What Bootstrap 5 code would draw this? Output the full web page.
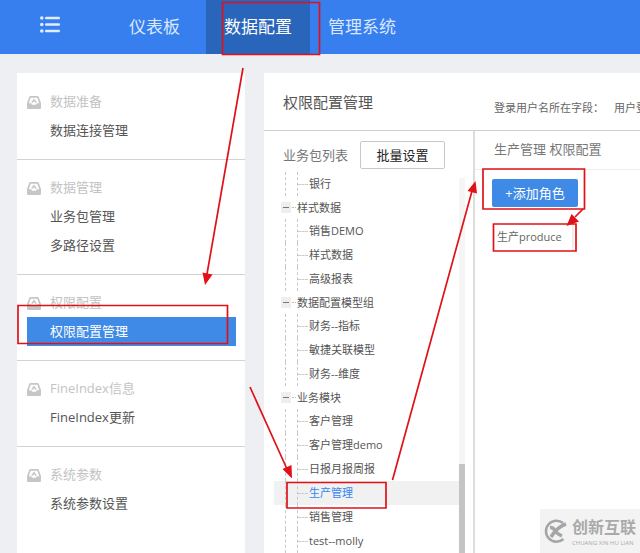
<!DOCTYPE html>
<html lang="zh-CN">
<head>
<meta charset="utf-8">
<meta name="viewport" content="width=device-width, initial-scale=1">
<title>权限配置管理</title>
<link href="https://cdn.jsdelivr.net/npm/bootstrap@5.3.0/dist/css/bootstrap.min.css" rel="stylesheet">
<style>
body{font-family:"Open Sans","Noto Sans CJK SC",sans-serif;font-size:13px;line-height:20px;background:#eeeff3;color:#555}
a{color:inherit;text-decoration:none}
.topbar{background:#377eee;min-height:54px;padding-left:28px}
.topbar a,.topbar button{font-size:17px;color:#d9e8ff}
.topbar .menu-btn{width:44px;margin-right:31px}
.topbar .tab{padding:0 18px}
.topbar .tab-wide{padding:0 26px}
.topbar .tab.active{background:#2a65bc;color:#fff}
.workspace{padding:19px 0 0 17px;gap:19px}
.side{width:228px;padding-top:1px}
.side section{padding:14px 9px 14px 10px;border-bottom:1px solid #d3d3d3}
.side section:last-child{border-bottom:0}
.side h2{font-size:13px;font-weight:400;color:#c3c3c3;height:28px;gap:9px}
.side h2 svg{fill:#c6c6c6}
.side a{height:29px;padding:0 0 1px 23px}
.side a.active{background:#3e8ae6;color:#fff}
.main-head{height:58px;padding-left:19px;border-bottom:1px solid #d0d0d0}
.main-head h1{font-size:15px;font-weight:400;width:211px}
.login-field{font-size:11px;gap:10px;padding-top:12px;color:#666}
.packages{width:211px;border-right:2px solid #ddd}
.pack-head{height:41px;padding:7px 0 0 19px;gap:12px;color:#777}
.batch{width:85px;height:28px;font-size:13px;color:#222;background:#fff;border:1px solid #c8c8c8;border-radius:2px;padding:0}
.tree{padding:0 0 0 10px;font-size:11px;min-width:0}
.tree .branch{height:23px;padding-left:7px}
.tree .branch button{width:10px;height:11px;background:#eee;padding:0 2px}
.tree .branch button span{display:block;height:1px;background:#777}
.tree .branch i{width:4px;border-top:1px dotted #bbb;margin:0 1px}
.tree .leaf{height:24px;padding-left:11px}
.tree .leaf::before{content:"";width:12px;border-left:1px dashed #c8c8c8}
.tree .leaf a{flex:1;border-left:1px dashed #c8c8c8}
.tree .leaf a::before{content:"";width:10px;margin-right:1px;border-top:1px dashed #ccc}
.tree .leaf.active{background:#f1f1f1}
.tree .leaf.active a{color:#3685f2}
.scroll{width:6px;background:#f5f5f5;margin-top:6px}
.scroll div{margin-top:286px;background:#c4c4c4}
.rights h2{height:39px;font-size:13px;font-weight:400;padding-left:19px;margin:0;color:#777;border-bottom:1px solid #eee}
.roles{padding:9px 17px}
.add-role{width:86px;height:28px;font-size:13px;border:0;border-radius:2px;background:#3e8ae6;color:#fff;padding:0}
.role{margin-top:16px;font-size:11px;width:82px;height:28px;padding:0 5px;border-right:2px solid #eee;color:#666}
.marks{pointer-events:none}
.stamp{right:0;bottom:0;width:100px;height:44px;background:#f3f3f3;color:#aaa;padding-left:3px;gap:4px}
.stamp b{display:block;font-size:16px;line-height:24px;font-weight:700}
.stamp em{display:block;font-style:normal;font-size:6px;line-height:9px;white-space:nowrap}
</style>
<script src="https://cdn.jsdelivr.net/npm/bootstrap@5.3.0/dist/js/bootstrap.bundle.min.js"></script>
</head>
<body class="vh-100 overflow-hidden d-flex flex-column position-relative">
<svg width="0" height="0" class="position-absolute" aria-hidden="true"><symbol id="tray" viewBox="0 0 14 13"><path fill-rule="evenodd" d="M3.500 0h7q.9 0 1.200.8L14 7v5q0 1-1 1H1q-1 0-1-1V7L2.300.8Q2.600 0 3.500 0zM3.700 1.800 1.800 7.200h2.400l.8 1.600h4l.8-1.600h2.400l-1.900-5.400z"/><path d="M7 2.600 9.800 6.200 8.800 7 7 5.200 5.200 7l-1-.8z"/></symbol></svg>
<nav class="topbar d-flex align-items-stretch flex-shrink-0">
  <button class="menu-btn btn border-0 p-0 d-flex align-items-center justify-content-center" aria-label="菜单">
    <svg width="20" height="22" viewBox="0 0 20 22" fill="#e1edff"><circle cx="1.800" cy="2" r="1.800"/><circle cx="1.800" cy="8.500" r="1.800"/><circle cx="1.800" cy="15" r="1.800"/><path d="M6 .8h13q1 0 1 1.200t-1 1.200H6q-1 0-1-1.200T6 .8zM6 7.300h13q1 0 1 1.200t-1 1.200H6q-1 0-1-1.200t1-1.200zM6 13.800h13q1 0 1 1.200t-1 1.200H6q-1 0-1-1.200t1-1.200z"/></svg>
  </button>
  <a href="#" class="tab tab-wide d-flex align-items-center">仪表板</a>
  <a href="#" class="tab active d-flex align-items-center" aria-current="page">数据配置</a>
  <a href="#" class="tab d-flex align-items-center">管理系统</a>
</nav>
<div class="workspace d-flex flex-grow-1 overflow-hidden">
  <aside class="side bg-white flex-shrink-0">
    <section><h2 class="d-flex align-items-center m-0"><svg width="14" height="13"><use href="#tray"/></svg>数据准备</h2>
      <a href="#" class="d-flex align-items-center">数据连接管理</a></section>
    <section><h2 class="d-flex align-items-center m-0"><svg width="14" height="13"><use href="#tray"/></svg>数据管理</h2>
      <a href="#" class="d-flex align-items-center">业务包管理</a><a href="#" class="d-flex align-items-center">多路径设置</a></section>
    <section><h2 class="d-flex align-items-center m-0"><svg width="14" height="13"><use href="#tray"/></svg>权限配置</h2>
      <a href="#" class="active d-flex align-items-center">权限配置管理</a></section>
    <section><h2 class="d-flex align-items-center m-0"><svg width="14" height="13"><use href="#tray"/></svg>FineIndex信息</h2>
      <a href="#" class="d-flex align-items-center">FineIndex更新</a></section>
    <section><h2 class="d-flex align-items-center m-0"><svg width="14" height="13"><use href="#tray"/></svg>系统参数</h2>
      <a href="#" class="d-flex align-items-center">系统参数设置</a></section>
  </aside>
  <main class="bg-white flex-grow-1 d-flex flex-column overflow-hidden">
    <header class="main-head d-flex align-items-center flex-shrink-0">
      <h1 class="m-0 flex-shrink-0">权限配置管理</h1>
      <div class="login-field d-flex text-nowrap"><span>登录用户名所在字段：</span><span>用户登</span></div>
    </header>
    <div class="d-flex flex-grow-1">
      <div class="packages flex-shrink-0 d-flex flex-column">
        <div class="pack-head d-flex align-items-center"><span>业务包列表</span><button class="batch">批量设置</button></div>
        <div class="d-flex flex-grow-1">
          <ul class="tree list-unstyled m-0 flex-grow-1">
            <li class="leaf d-flex"><a href="#" class="d-flex align-items-center">银行</a></li>
            <li class="branch d-flex align-items-center"><button class="border-0" aria-label="收起"><span></span></button><i></i>样式数据</li>
            <li class="leaf d-flex"><a href="#" class="d-flex align-items-center">销售DEMO</a></li>
            <li class="leaf d-flex"><a href="#" class="d-flex align-items-center">样式数据</a></li>
            <li class="leaf d-flex"><a href="#" class="d-flex align-items-center">高级报表</a></li>
            <li class="branch d-flex align-items-center"><button class="border-0" aria-label="收起"><span></span></button><i></i>数据配置模型组</li>
            <li class="leaf d-flex"><a href="#" class="d-flex align-items-center">财务--指标</a></li>
            <li class="leaf d-flex"><a href="#" class="d-flex align-items-center">敏捷关联模型</a></li>
            <li class="leaf d-flex"><a href="#" class="d-flex align-items-center">财务--维度</a></li>
            <li class="branch d-flex align-items-center"><button class="border-0" aria-label="收起"><span></span></button><i></i>业务模块</li>
            <li class="leaf d-flex"><a href="#" class="d-flex align-items-center">客户管理</a></li>
            <li class="leaf d-flex"><a href="#" class="d-flex align-items-center">客户管理demo</a></li>
            <li class="leaf d-flex"><a href="#" class="d-flex align-items-center">日报月报周报</a></li>
            <li class="leaf active d-flex"><a href="#" class="d-flex align-items-center">生产管理</a></li>
            <li class="leaf d-flex"><a href="#" class="d-flex align-items-center">销售管理</a></li>
            <li class="leaf d-flex"><a href="#" class="d-flex align-items-center">test--molly</a></li>
          </ul>
          <div class="scroll d-flex flex-column me-2"><div class="flex-grow-1"></div></div>
        </div>
      </div>
      <div class="rights flex-grow-1">
        <h2 class="d-flex align-items-center">生产管理 权限配置</h2>
        <div class="roles"><button class="add-role d-block">+添加角色</button>
          <a href="#" class="role d-flex align-items-center text-nowrap">生产produce</a></div>
      </div>
    </div>
  </main>
</div>
<div class="stamp position-absolute d-flex align-items-center">
  <svg class="flex-shrink-0" width="25" height="25" viewBox="0 0 25 25" fill="none" stroke="#a5a5a5"><path d="M20 4A10.500 10.500 0 1 0 20.500 20" stroke-width="2.500"/><path d="M7 8.500q3-.5 5 3t7 5.500M23 5Q14 8 8 18" stroke-width="3.500"/></svg>
  <div><b>创新互联</b><em>CHUANG XIN HU LIAN</em></div>
</div>
<svg class="marks position-absolute top-0 start-0" width="640" height="553" viewBox="0 0 640 553" fill="none" stroke="#e01218" stroke-width="1.700" aria-hidden="true">
  <path d="M222.500 2.500h97v52h-97zM18 305.500h209.500v38H18zM287 482.500h99v25.500h-99zM483 169h101.500v40H483zM493.500 224H576v27h-82.500z"/>
  <path d="M243 68 207 274M250 387 287 469M392.500 480 472 191M583 209 575 217"/>
  <path fill="#e01218" stroke="none" d="M205 285 202.500 272.500 212.500 274.500zM292 478.500 282.500 469 291.500 465zM475.500 181 477 193.500 467.500 191zM566.500 226 571.500 214 579 221.500z"/>
</svg>
</body>
</html>
